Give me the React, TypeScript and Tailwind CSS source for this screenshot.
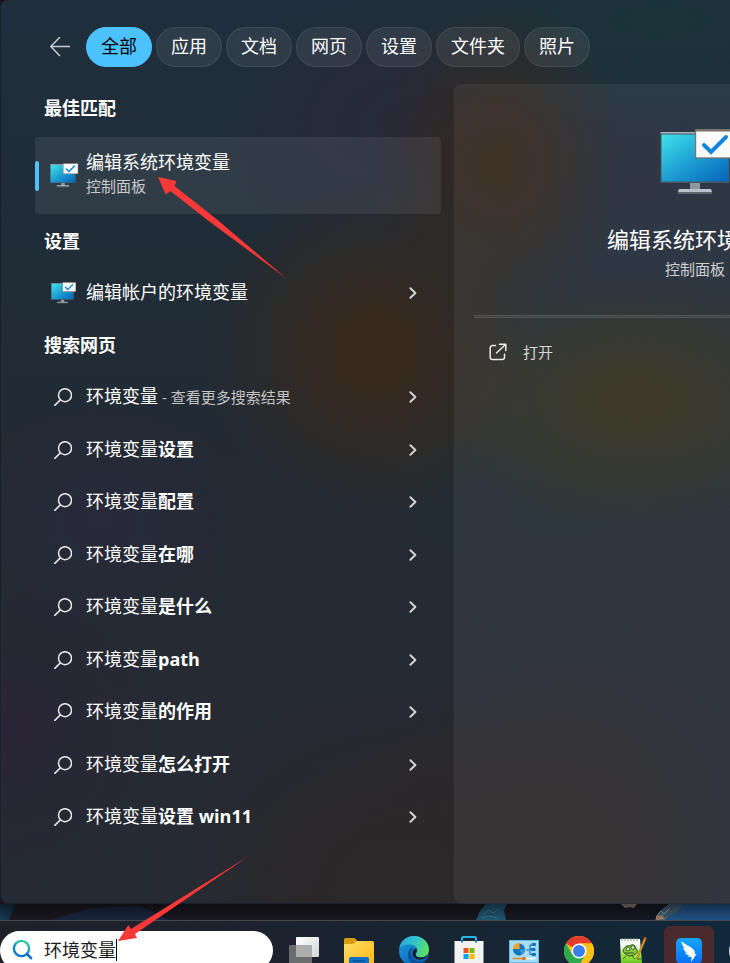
import { useState } from 'react'
import type { ReactNode } from 'react'
import clsx from 'clsx'

const FILTERS = ['全部', '应用', '文档', '网页', '设置', '文件夹', '照片']

interface Suggestion {
  suffix?: string
  note?: string
}

const SUGGESTIONS: Suggestion[] = [
  { note: '查看更多搜索结果' },
  { suffix: '设置' },
  { suffix: '配置' },
  { suffix: '在哪' },
  { suffix: '是什么' },
  { suffix: 'path' },
  { suffix: '的作用' },
  { suffix: '怎么打开' },
  { suffix: '设置 win11' },
]

function MonitorIcon({ id, className }: { id: string; className: string }) {
  return (
    <svg viewBox="0 0 70 66" className={clsx('overflow-visible', className)} aria-hidden="true">
      <defs>
        <linearGradient id={id} x1="0" y1="0" x2="1" y2="1">
          <stop offset="0" stopColor="#3fe3ea" />
          <stop offset="0.5" stopColor="#1e9fd3" />
          <stop offset="1" stopColor="#0563b8" />
        </linearGradient>
      </defs>
      <path d="M30 53h10v9H30z" fill="#8e979f" />
      <path d="M19 60h32l1 3H18z" fill="#b9c2ca" />
      <path d="M18 63h34v2H18z" fill="#5c646b" />
      <rect x="0.500" y="3" width="69" height="51" rx="1" fill="#4c5660" />
      <path d="M0.500 3h68v1.500H0.500z" fill="#a9b2ba" />
      <rect x="1.500" y="5.500" width="67" height="47" fill={`url(#${id})`} />
      <rect x="35" y="0" width="41" height="29.500" fill="#77736f" />
      <rect x="36.200" y="2.500" width="38.600" height="25.800" fill="#fafafa" />
      <path d="M44 16l7 7 15-15" fill="none" stroke="#1287dc" strokeWidth="4" strokeLinecap="round" />
    </svg>
  )
}

function SearchGlyph() {
  return (
    <svg viewBox="0 0 18 18" className="w-[18px] h-[18px]" fill="none" stroke="#e8e8ea" strokeWidth="1.500" strokeLinecap="round" aria-hidden="true">
      <circle cx="11" cy="7.200" r="6.500" />
      <path d="M6.300 11.900L0.800 17.400" />
    </svg>
  )
}

function Chevron() {
  return (
    <svg viewBox="0 0 8 12" className="w-2 h-3 shrink-0" fill="none" stroke="#d6d6d8" strokeWidth="1.900" strokeLinecap="round" strokeLinejoin="round" aria-hidden="true">
      <path d="M1.400 1.200l5 4.800-5 4.800" />
    </svg>
  )
}

function Heading({ children }: { children: ReactNode }) {
  return <h2 className="flex h-[52px] items-center pl-[9px] text-lg font-bold">{children}</h2>
}

function ResultRow({ icon, children, className }: { icon: ReactNode; children: ReactNode; className?: string }) {
  return (
    <button className={clsx('flex w-full items-center pl-1 pr-6 text-left', className)}>
      <span className="flex w-[47px] shrink-0 justify-center">{icon}</span>
      <span className="flex-1 pb-[2px] text-lg leading-6">{children}</span>
      <Chevron />
    </button>
  )
}

function Filters() {
  const [active, setActive] = useState('全部')
  return (
    <nav className="flex items-center gap-1 pl-[50px]">
      <button aria-label="返回" className="mr-3 w-5 shrink-0">
        <svg viewBox="0 0 20 20" className="h-5 w-5" fill="none" stroke="#c9cdd1" strokeWidth="1.500" strokeLinecap="round" strokeLinejoin="round">
          <path d="M19.500 9.500H0.800M9.500 0.500L0.800 9.500l8.700 9" />
        </svg>
      </button>
      {FILTERS.map((name) => (
        <button
          key={name}
          onClick={() => setActive(name)}
          className={clsx(
            'h-10 shrink-0 rounded-full border px-[14px] pb-[2px] text-lg',
            active === name ? 'border-[#4cc2ff] bg-[#4cc2ff] text-black' : 'border-white/8 bg-white/7',
          )}
        >
          {name}
        </button>
      ))}
    </nav>
  )
}

function ResultList() {
  return (
    <section className="w-[454px] shrink-0 pb-[61px] pl-[35px] pr-[13px] pt-[15px]">
      <Heading>最佳匹配</Heading>
      <button className="relative mb-px mt-[3px] flex h-[77px] w-full items-center rounded-sm bg-white/7 pl-1 text-left">
        <span className="absolute left-0 h-[30px] w-1 rounded-full bg-[#4cc2ff]" />
        <span className="flex w-[47px] shrink-0 justify-center">
          <MonitorIcon id="screen-best" className="w-[26px]" />
        </span>
        <span className="flex flex-col pb-1">
          <span className="text-lg leading-6">编辑系统环境变量</span>
          <span className="text-[15px] leading-6 text-[#c9cbcf]">控制面板</span>
        </span>
      </button>

      <Heading>设置</Heading>
      <ResultRow className="h-[52px]" icon={<MonitorIcon id="screen-account" className="w-[23px]" />}>
        编辑帐户的环境变量
      </ResultRow>

      <Heading>搜索网页</Heading>
      <ul>
        {SUGGESTIONS.map(({ suffix, note }) => (
          <li key={suffix ?? note} className="flex h-[52px] even:h-[53px]">
            <ResultRow icon={<SearchGlyph />}>
              环境变量
              {suffix && <b className="font-bold">{suffix}</b>}
              {note && <span className="text-[15px] text-[#c2c2c4]"> - {note}</span>}
            </ResultRow>
          </li>
        ))}
      </ul>
    </section>
  )
}

function DetailPane() {
  return (
    <section className="mt-[17px] flex min-w-[482px] flex-1 flex-col rounded-l-lg bg-white/6 px-5">
      <div className="flex flex-col items-center pt-[45px]">
        <MonitorIcon id="screen-detail" className="w-[70px]" />
        <h1 className="mt-[28px] text-[22px] leading-8">编辑系统环境变量</h1>
        <p className="mt-[2px] text-[15px] leading-6 text-[#cfd0d3]">控制面板</p>
      </div>
      <div className="mt-[34px] h-[3px] border-y border-white/10 bg-white/5" />
      <button className="mt-[18px] flex h-8 items-center gap-4 pl-[15px] text-[15px] text-[#d6d6d6]">
        <svg viewBox="0 0 18 18" className="h-[18px] w-[18px]" fill="none" stroke="#ececec" strokeWidth="1.500" strokeLinecap="round" strokeLinejoin="round" aria-hidden="true">
          <path d="M6.500 2.500h-3a2.300 2.300 0 0 0-2.300 2.300v9.400a2.300 2.300 0 0 0 2.300 2.300h9.700a2.300 2.300 0 0 0 2.300-2.300v-3" />
          <path d="M10.500 1.200h6.300v6.300M16.500 1.500l-9 8.500" />
        </svg>
        打开
      </button>
    </section>
  )
}

// The sliver of wallpaper that shows between the panel and the taskbar
function Wallpaper() {
  return (
    <div className="h-4 shrink-0 overflow-hidden">
      <svg viewBox="0 0 730 16" className="h-4 w-[730px]" aria-hidden="true">
        <defs>
          <linearGradient id="wall-left" x1="0" y1="0" x2="1" y2="0">
            <stop offset="0" stopColor="#183f5c" />
            <stop offset="1" stopColor="#14283c" />
          </linearGradient>
          <linearGradient id="wall-shade" x1="0" y1="0" x2="0" y2="1">
            <stop offset="0" stopColor="#000" stopOpacity="0.450" />
            <stop offset="1" stopColor="#000" stopOpacity="0" />
          </linearGradient>
        </defs>
        <path d="M0 0h730v16H0z" fill="#1a1820" />
        <path d="M0 0h16l-7 16H0z" fill="url(#wall-left)" />
        <path d="M50 16l40-12 50-2 30 14z" fill="#19243e" />
        <path d="M476 16l4-9 6-7h21l-3 6 2 10z" fill="#1f5470" />
        <path d="M484 10l5-4 4 3 6-4M482 14l7-2 8 2" stroke="#3a7590" fill="none" />
        <path d="M510 0h150v16H516z" fill="#151922" />
        <path d="M621 0h16l-3 4-5-1-4 1z" fill="#8a7d74" />
        <path d="M655 16l6-10 8-6h61v16z" fill="#215283" />
        <path d="M655 16l5-9 9-7h13l-3 7-9 4-4 5z" fill="#3f5d70" />
        <path d="M656 13l5-6 3 3 5-5" stroke="#93a0a3" fill="none" />
        <path d="M656 12l6-1 3 4-9 1z" fill="#a37c68" />
        <path d="M0 0h730v16H0z" fill="url(#wall-shade)" />
      </svg>
    </div>
  )
}

function TaskViewIcon() {
  return (
    <svg viewBox="0 0 30 30" className="h-[30px] w-[30px]">
      <defs>
        <linearGradient id="tv" x1="0" y1="0" x2="1" y2="1">
          <stop offset="0" stopColor="#fff" />
          <stop offset="1" stopColor="#d4d4d4" />
        </linearGradient>
      </defs>
      <rect x="7" y="1" width="23" height="20" rx="1" fill="url(#tv)" />
      <rect x="0" y="9" width="23" height="20" rx="1" fill="#6c6c6c" />
      <path d="M7 9h16v12H7z" fill="#acacac" />
    </svg>
  )
}

function ExplorerIcon() {
  return (
    <svg viewBox="0 0 30 30" className="h-[30px] w-[30px]">
      <defs>
        <linearGradient id="folder" x1="0" y1="0" x2="1" y2="1">
          <stop offset="0" stopColor="#ffdd6b" />
          <stop offset="1" stopColor="#fbb912" />
        </linearGradient>
      </defs>
      <path d="M0 3.500A1.500 1.500 0 0 1 1.500 2h9l3 3-3 4H0z" fill="#d99a0e" />
      <path d="M0 8h9l4-3h15.500A1.500 1.500 0 0 1 30 6.500V29H0z" fill="url(#folder)" />
      <path d="M5 30v-7.500A1.800 1.800 0 0 1 6.800 21h16.400a1.800 1.800 0 0 1 1.800 1.500V30z" fill="#0d72c7" />
      <path d="M9 25h12" stroke="#0a4d8c" strokeWidth="1.500" />
    </svg>
  )
}

function EdgeIcon() {
  return (
    <svg viewBox="0 0 30 30" className="h-[30px] w-[30px]">
      <defs>
        <linearGradient id="edge-top" x1="0" y1="0.300" x2="1" y2="0.600">
          <stop offset="0" stopColor="#2aa9e0" />
          <stop offset="0.500" stopColor="#30c5c9" />
          <stop offset="1" stopColor="#63e05a" />
        </linearGradient>
        <linearGradient id="edge-low" x1="0" y1="0" x2="1" y2="1">
          <stop offset="0" stopColor="#1b9de2" />
          <stop offset="1" stopColor="#0a55a8" />
        </linearGradient>
      </defs>
      <circle cx="15" cy="15" r="15" fill="url(#edge-low)" />
      <path d="M0.200 13C1 5 7.500 0 15 0c9 0 15 6.500 15 13.500 0 5-4 8-8 8-3.500 0-5.500-1.500-5.300-2.800.2-1.200 1.500-1.700 1.500-4.200 0-3.500-3.700-6-8.200-6C5 8.500 1.200 10.500 0.200 13z" fill="url(#edge-top)" />
      <path d="M12.500 12c-5 3-4.500 11 .5 15 3 2 9 2.500 13.500-2.500-7 3-14.500-.5-14.500-7.500 0-2 .5-3.500 2.500-5z" fill="#0c4f9c" />
      <path d="M17.800 12.500c1 3-1.300 4.500-1.200 6 .2 1.800 2.500 3 5.400 3 3 0 5-1 6.500-2.500-1 3-4.500 4.500-8 4.500-4 0-7-2.500-7-6 0-3 1.500-5 4.300-5z" fill="#15212d" />
    </svg>
  )
}

function StoreIcon() {
  return (
    <svg viewBox="0 0 30 30" className="h-[30px] w-[30px]">
      <path d="M8 7V2.300A1.300 1.300 0 0 1 9.300 1h11.400A1.300 1.300 0 0 1 22 2.300V7" fill="none" stroke="#2bb7ee" strokeWidth="2" />
      <path d="M0.500 5h29v22a3 3 0 0 1-3 3h-23a3 3 0 0 1-3-3z" fill="#f2f2f2" />
      <path d="M8 4v2.500M22 4v2.500" stroke="#0d7cc2" strokeWidth="2" />
      <path d="M9.500 12h5v5h-5z" fill="#f25022" />
      <path d="M15.500 12h5v5h-5z" fill="#7fba00" />
      <path d="M9.500 18h5v5h-5z" fill="#00a4ef" />
      <path d="M15.500 18h5v5h-5z" fill="#ffb900" />
    </svg>
  )
}

function ControlPanelIcon() {
  return (
    <svg viewBox="0 0 30 30" className="h-[30px] w-[30px]">
      <rect x="0.500" y="4.500" width="29" height="22" fill="#a6dcf5" stroke="#63bde8" />
      <circle cx="10" cy="13.500" r="6" fill="#1374be" />
      <path d="M10 13.500V7.500a6 6 0 0 0-6 6z" fill="#1374be" />
      <path d="M10.500 13V6.500a6.500 6.500 0 0 0-6.500 6.500z" fill="#f8a32a" />
      <path d="M10 13.500h6a6 6 0 0 1-3 5z" fill="#2f9be0" />
      <path d="M17 14h4M21 9v9.500M21 9h3M21 18.500h3M21 13h2" stroke="#1374be" strokeWidth="1.200" />
      <rect x="22.500" y="7" width="4.500" height="3" rx="1" fill="#1374be" />
      <rect x="22" y="12" width="4.500" height="3" rx="1" fill="#1374be" />
      <rect x="22.500" y="17" width="4.500" height="3" rx="1" fill="#1374be" />
      <path d="M3.500 22.500h13" stroke="#f0861c" strokeWidth="1.500" />
      <path d="M16.500 22.500h10" stroke="#fff" strokeWidth="1.500" />
      <circle cx="15" cy="22.500" r="1.800" fill="#e46f10" />
    </svg>
  )
}

function ChromeIcon() {
  return (
    <svg viewBox="0 0 30 30" className="h-[30px] w-[30px]">
      <circle cx="15" cy="15" r="15" fill="#fbc116" />
      <path d="M15 15L2 7.500A15 15 0 0 1 28 7.500H15z" fill="#e33b2e" />
      <path d="M2 7.500a15 15 0 0 0 13 22.500l6.500-11.300L15 15 8.500 18.700z" fill="#2da94f" />
      <path d="M15 7.500h13A15 15 0 0 1 15 30l6.500-11.300z" fill="#fbc116" />
      <circle cx="15" cy="15" r="7.500" fill="#fff" />
      <circle cx="15" cy="15" r="6" fill="#3b7ded" />
    </svg>
  )
}

function NotepadIcon() {
  return (
    <svg viewBox="0 0 30 30" className="h-[30px] w-[30px]">
      <defs>
        <linearGradient id="npp" x1="0" y1="0" x2="0" y2="1">
          <stop offset="0.250" stopColor="#f8fbf3" />
          <stop offset="0.600" stopColor="#a4e34a" />
          <stop offset="1" stopColor="#5cc316" />
        </linearGradient>
      </defs>
      <path d="M1 3l20 0 2 24-21 2z" fill="url(#npp)" />
      <path d="M3 2v3M6 2v3M9 2v3M12 2v3M15 2v3M18 2v3" stroke="#8d9a94" strokeWidth="1" />
      <path d="M4 15c1-4 4-6 7-5 3-3 6 0 6 3 2 1 2 4-1 5-3 3-9 3-12-3z" fill="#86c93a" stroke="#2c4f20" strokeWidth="1" />
      <circle cx="9" cy="13" r="1.800" fill="#dff0cb" stroke="#2c4f20" strokeWidth="0.800" />
      <circle cx="14" cy="11.500" r="1.800" fill="#dff0cb" stroke="#2c4f20" strokeWidth="0.800" />
      <path d="M6 17h9M7 20l-3 3M13 20l3 3M19 23h3" stroke="#2c4f20" strokeWidth="0.900" />
      <path d="M27.500 2l-8 19-1.500 3 .2-3.600L25.500 1z" fill="#e8a72e" stroke="#8f5714" strokeWidth="0.500" />
      <path d="M27.500 2l-.8 2-2-1 .8-2z" fill="#cf3b34" />
    </svg>
  )
}

function DingTalkIcon() {
  return (
    <svg viewBox="0 0 30 30" className="h-[30px] w-[30px]">
      <defs>
        <linearGradient id="ding" x1="0" y1="0" x2="0" y2="1">
          <stop offset="0" stopColor="#12a6ff" />
          <stop offset="1" stopColor="#0a6ff5" />
        </linearGradient>
      </defs>
      <rect x="2" y="2" width="26" height="26" rx="5" fill="url(#ding)" />
      <path d="M7.500 5c3 3.500 7.500 4.500 11 7.500 2.200 1.900 3 3.800 2 5.500l2 .3L17 26l.7-5-4.200-.6 2-.7c-2-.4-3.800-1.500-4.500-3.200l2.800.6C11 15.700 9.300 13.700 9 11.500l2.500 1.500C9 10.800 7.500 8 7.500 5z" fill="#fff" />
    </svg>
  )
}

function GlobeIcon() {
  return (
    <svg viewBox="0 0 30 30" className="h-[30px] w-[30px]">
      <circle cx="15" cy="15" r="14" fill="none" stroke="#cfd6dc" strokeWidth="2" />
    </svg>
  )
}

const APPS = [
  { name: '任务视图', Icon: TaskViewIcon },
  { name: '文件资源管理器', Icon: ExplorerIcon },
  { name: 'Microsoft Edge', Icon: EdgeIcon },
  { name: 'Microsoft Store', Icon: StoreIcon },
  { name: '控制面板', Icon: ControlPanelIcon },
  { name: 'Google Chrome', Icon: ChromeIcon },
  { name: 'Notepad++', Icon: NotepadIcon },
  { name: '钉钉', Icon: DingTalkIcon, alert: true },
  { name: '浏览器', Icon: GlobeIcon },
]

function Taskbar() {
  const [query, setQuery] = useState('环境变量')
  return (
    <footer className="flex h-[60px] shrink-0 items-center border-t border-[#46484c] bg-linear-to-r from-[#1f2028] via-[#192431] via-55% to-[#10293b]">
      <label className="flex h-[39px] w-[273px] shrink-0 items-center rounded-full bg-white pb-[2px] pl-3">
        <svg viewBox="0 0 21 21" className="h-[21px] w-[21px] shrink-0" fill="none" aria-hidden="true">
          <defs>
            <linearGradient id="lens" x1="0.800" y1="0" x2="0.300" y2="1">
              <stop offset="0" stopColor="#3fd08a" />
              <stop offset="0.450" stopColor="#1a9fc4" />
              <stop offset="1" stopColor="#0b6fd3" />
            </linearGradient>
          </defs>
          <circle cx="9.500" cy="9.500" r="7.600" stroke="url(#lens)" strokeWidth="2.400" />
          <path d="M15 15l4 4.200" stroke="#0b6fd3" strokeWidth="2.600" strokeLinecap="round" />
        </svg>
        <input
          aria-label="搜索"
          value={query}
          onChange={(e) => setQuery(e.target.value)}
          className="ml-[11px] w-[72px] bg-transparent text-lg leading-6 text-[#1b1b1b] outline-none"
        />
        <span className="h-[22px] w-px bg-black" />
      </label>
      <div className="ml-[6px] flex gap-[5px]">
        {APPS.map(({ name, Icon, alert }) => (
          <button
            key={name}
            aria-label={name}
            className={clsx('flex h-[50px] w-[50px] shrink-0 items-center justify-center rounded-md', alert && 'bg-[#4a2a2c]')}
          >
            <Icon />
          </button>
        ))}
      </div>
    </footer>
  )
}

function Arrows() {
  return (
    <svg width="300" height="960" className="pointer-events-none absolute left-0 top-0" fill="#fb3838" aria-hidden="true">
      <path d="M158 177L176.500 181 174.500 186 217 219.500 287 279 208 220.500 170.500 191 165.700 194.500z" />
      <path d="M118 941L128.300 925 131 929 247.700 856.700 135 934 137 938z" />
    </svg>
  )
}

export default function App() {
  return (
    <div className="relative flex h-screen flex-col overflow-hidden bg-[#17131a] font-['Open_Sans','Noto_Sans_CJK_SC',sans-serif] text-white">
      <main className="flex shrink-0 flex-col overflow-hidden rounded-l-lg shadow-[inset_1px_-1px_0_#1a2029] bg-[radial-gradient(ellipse_170px_170px_at_375px_350px,#38291c_15%,transparent),radial-gradient(ellipse_130px_170px_at_500px_165px,#35281c_10%,transparent),radial-gradient(ellipse_210px_130px_at_635px_400px,#312e1c_15%,transparent),radial-gradient(ellipse_160px_160px_at_0px_730px,#2a2536,transparent),radial-gradient(ellipse_150px_120px_at_100px_520px,#282939,transparent),radial-gradient(ellipse_240px_200px_at_390px_890px,#2d2829_20%,transparent),radial-gradient(ellipse_300px_100px_at_660px_20px,#1c3339,transparent),radial-gradient(ellipse_200px_140px_at_400px_120px,#27293a,transparent),radial-gradient(ellipse_180px_140px_at_640px_190px,#222b3b_10%,transparent),radial-gradient(ellipse_220px_220px_at_560px_860px,#2c2829_20%,transparent),radial-gradient(ellipse_200px_160px_at_560px_500px,#212d31,transparent),linear-gradient(180deg,#1f2f3d_0%,#202c36_30%,#232b34_55%,#262a33_80%,#242b34_100%)]">
        <div className="pt-[27px]">
          <Filters />
        </div>
        <div className="flex">
          <ResultList />
          <DetailPane />
        </div>
      </main>
      <Wallpaper />
      <Taskbar />
      <Arrows />
    </div>
  )
}
